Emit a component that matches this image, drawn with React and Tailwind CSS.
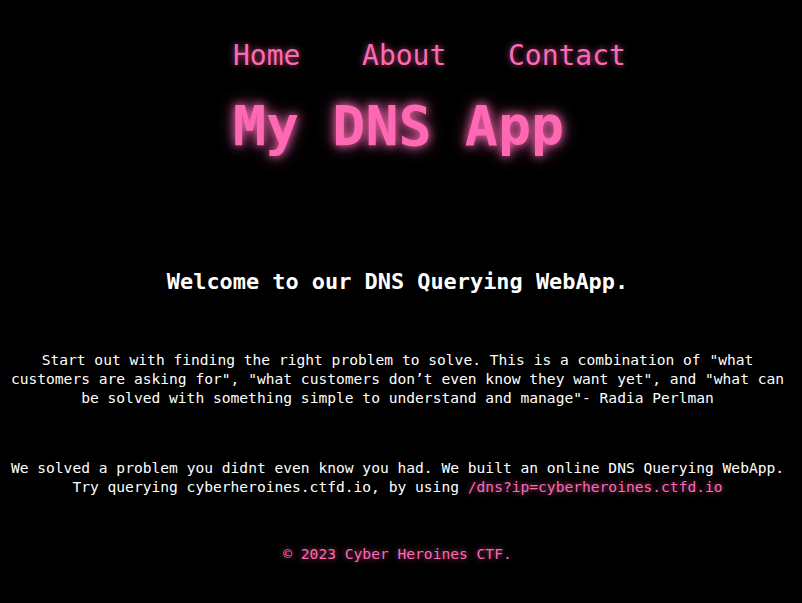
export default function App() {
  const mono = { fontFamily: '"DejaVu Sans Mono", "Liberation Mono", monospace' };

  return (
    <div className="min-h-[603px] bg-black text-white" style={mono}>
      {/* Header */}
      <header className="pt-[36px] pl-[233px]">
        <nav className="flex gap-[61.6px] text-[28px] leading-[40px] text-[#ff69b4] [text-shadow:0_0_6px_rgba(255,105,180,0.7)]">
          <a href="#">Home</a>
          <a href="#">About</a>
          <a href="#">Contact</a>
        </nav>
        <h1 className="mt-[18px] text-[55px] leading-[64px] font-bold text-[#ff69b4] [text-shadow:0_0_10px_#ff69b4,0_0_18px_rgba(255,105,180,0.6)]">
          My DNS App
        </h1>
      </header>

      {/* Main */}
      <main className="mt-[109px] pl-[4px] pr-[11px] text-center">
        <h2 className="text-[21.9px] leading-[30px] font-bold">
          Welcome to our DNS Querying WebApp.
        </h2>

        <p className="mt-[53px] text-[14.6px] leading-[19px]">
          Start out with finding the right problem to solve. This is a combination of "what
          <br />
          customers are asking for", "what customers don’t even know they want yet", and "what can
          <br />
          be solved with something simple to understand and manage"- Radia Perlman
        </p>

        <p className="mt-[51px] text-[14.6px] leading-[19px]">
          We solved a problem you didnt even know you had. We built an online DNS Querying WebApp.
          <br />
          Try querying cyberheroines.ctfd.io, by using{' '}
          <a href="#" className="text-[#ff69b4] [text-shadow:0_0_6px_rgba(255,105,180,0.7)]">
            /dns?ip=cyberheroines.ctfd.io
          </a>
        </p>
      </main>

      {/* Footer */}
      <footer className="mt-[48px] pl-[4px] pr-[11px] text-center text-[14.6px] leading-[19px] text-[#ff69b4] [text-shadow:0_0_6px_rgba(255,105,180,0.7)]">
        © 2023 Cyber Heroines CTF.
      </footer>
    </div>
  );
}
